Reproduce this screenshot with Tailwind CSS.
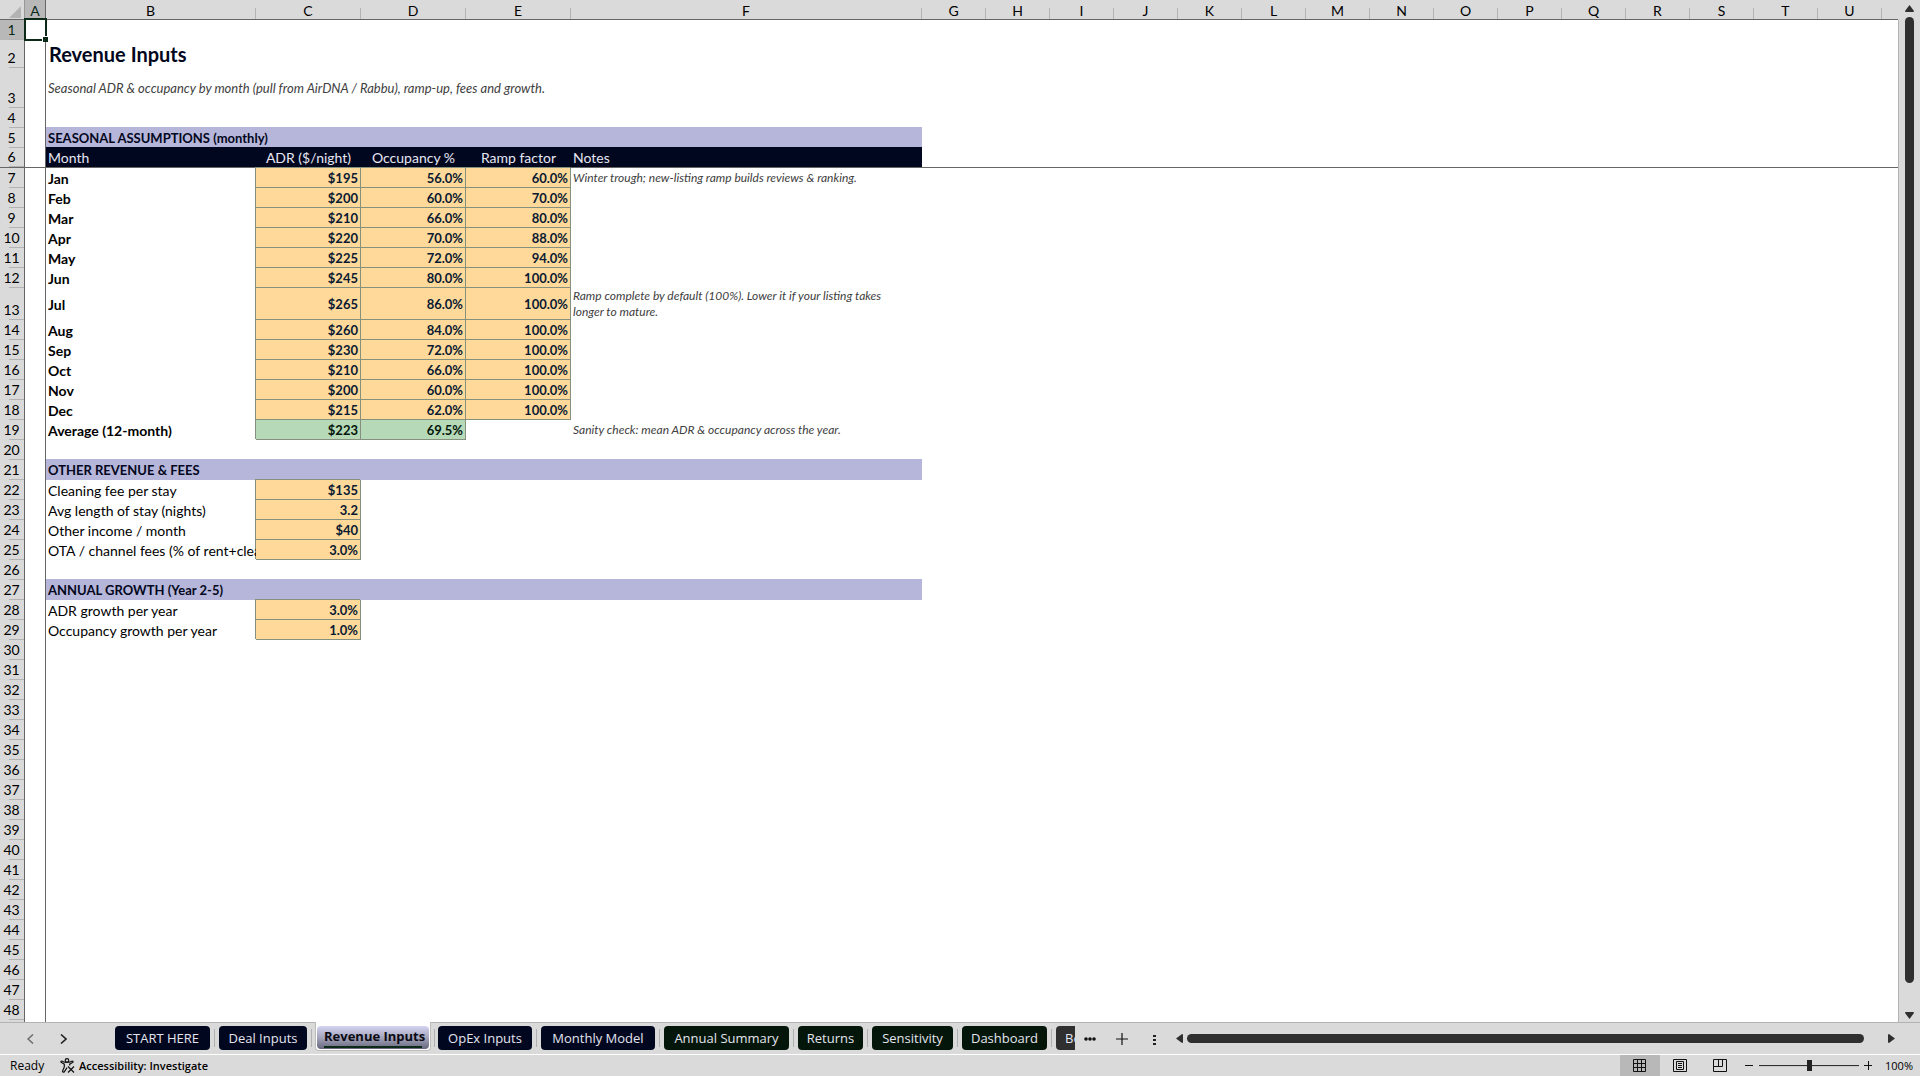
<!DOCTYPE html>
<html lang="en">
  <head>
    <meta charset="UTF-8" />
    <meta name="viewport" content="width=device-width, initial-scale=1.0" />
    <title>Revenue Inputs</title>
    <script src="https://cdn.jsdelivr.net/npm/@tailwindcss/browser@4"></script>
  </head>
  <body
    class="h-screen flex flex-col overflow-hidden bg-[#dadada] text-black font-['Open_Sans',sans-serif]"
  >
    <main class="flex flex-1 min-h-0">
      <div class="flex-1 min-w-0 overflow-hidden relative">
        <table
          class="table-fixed w-full border-separate border-spacing-0 bg-white font-['Lato',sans-serif] text-[14px] leading-4"
        >
          <colgroup id="columns">
            <col class="w-[25px]" />
            <col class="w-[21px]" />
            <col class="w-[210px]" />
            <col class="w-[105px]" />
            <col class="w-[105px]" />
            <col class="w-[105px]" />
            <col class="w-[351px]" />
          </colgroup>
          <thead>
            <tr id="letters" class="h-5"></tr>
          </thead>
          <tbody id="sheet"></tbody>
        </table>
        <!-- active cell -->
        <div
          class="absolute left-[24px] top-[18px] w-[23px] h-[23px] border-2 border-[#0b2a18]"
        >
          <span
            class="absolute -right-[3px] -bottom-[3px] size-[6px] bg-[#0b2a18] border-t border-l border-white"
          ></span>
        </div>
      </div>
      <div
        class="w-[22px] flex flex-col items-center pt-[5px] pb-[3px] gap-[5px] relative"
      >
        <span class="absolute left-0 top-5 bottom-0 w-px bg-[#b3b3b3]"></span>
        <button aria-label="Scroll up">
          <svg class="block" width="9" height="7" fill="#2f2f2f">
            <path d="M4.5 0 L9 6 Q9 7 8 7 H1 Q0 7 0 6 Z" />
          </svg>
        </button>
        <div class="flex-1 w-[9px] flex flex-col pb-6">
          <div class="flex-1 rounded-full bg-[#2f2f2f]"></div>
        </div>
        <button aria-label="Scroll down">
          <svg class="block" width="9" height="7" fill="#2f2f2f">
            <path d="M4.5 7 L9 1 Q9 0 8 0 H1 Q0 0 0 1 Z" />
          </svg>
        </button>
      </div>
    </main>

    <nav
      class="h-[33px] flex items-center border-t border-t-[#b3b3b3] border-b border-b-white relative"
    >
      <div class="w-[115px] flex items-center pl-[27px] gap-[26px]">
        <button aria-label="Previous sheet">
          <svg class="block" width="7" height="10" fill="none" stroke="#666" stroke-width="1.4">
            <path d="M6 .5 L1 5 L6 9.5" />
          </svg>
        </button>
        <button aria-label="Next sheet">
          <svg class="block" width="7" height="10" fill="none" stroke="#222" stroke-width="1.6">
            <path d="M1 .5 L6 5 L1 9.5" />
          </svg>
        </button>
      </div>
      <div class="w-[960px] h-[33px] -mt-px flex items-center overflow-hidden text-[13px] leading-[23px] text-[#e4e4ee] whitespace-nowrap">
        <button class="w-[95px] h-6 shrink-0 rounded bg-[#020720]">START HERE</button>
        <span class="w-px h-[18px] mx-1 shrink-0 bg-[#b0b0b0]"></span>
        <button class="w-[88px] h-6 shrink-0 rounded bg-[#020720]">Deal Inputs</button>
        <span class="w-px h-[18px] ml-1 mr-[3px] shrink-0 bg-[#b0b0b0]"></span>
        <div class="w-[116px] h-[29px] shrink-0 self-start px-px bg-white rounded-b border-x border-b border-[#bdbdbd]">
          <button
            class="w-full h-[23px] mt-1 block rounded bg-linear-to-b from-[#d4d4f4] via-[#a5a5bb] to-[#66667c] px-[7px] text-[#0a0a14] font-bold"
          >
            <span class="block h-[21px] leading-[18px] border-b-2 border-[#0b2a18]">Revenue Inputs</span>
          </button>
        </div>
        <span class="w-px h-[18px] mx-[3px] shrink-0 bg-[#b0b0b0]"></span>
        <button class="w-[94px] h-6 shrink-0 rounded bg-[#020720]">OpEx Inputs</button>
        <span class="w-px h-[18px] mx-1 shrink-0 bg-[#b0b0b0]"></span>
        <button class="w-[114px] h-6 shrink-0 rounded bg-[#020720]">Monthly Model</button>
        <span class="w-px h-[18px] mx-1 shrink-0 bg-[#b0b0b0]"></span>
        <button class="w-[125px] h-6 shrink-0 rounded bg-[#04160a]">Annual Summary</button>
        <span class="w-px h-[18px] mx-1 shrink-0 bg-[#b0b0b0]"></span>
        <button class="w-[65px] h-6 shrink-0 rounded bg-[#04160a]">Returns</button>
        <span class="w-px h-[18px] mx-1 shrink-0 bg-[#b0b0b0]"></span>
        <button class="w-[81px] h-6 shrink-0 rounded bg-[#04160a]">Sensitivity</button>
        <span class="w-px h-[18px] mx-1 shrink-0 bg-[#b0b0b0]"></span>
        <button class="w-[85px] h-6 shrink-0 rounded bg-[#04160a]">Dashboard</button>
        <span class="w-px h-[18px] mx-1 shrink-0 bg-[#b0b0b0]"></span>
        <button class="h-6 shrink-0 rounded bg-[#2f2f2f] px-[9px]">Benchmarks</button>
      </div>
      <div class="flex items-center pl-[9px] gap-5">
        <button aria-label="More sheets">
          <svg class="block" width="12" height="12" fill="#111">
            <circle cx="2" cy="6" r="1.8" />
            <circle cx="6" cy="6" r="1.8" />
            <circle cx="10" cy="6" r="1.8" />
          </svg>
        </button>
        <button aria-label="New sheet">
          <svg class="block" width="12" height="12" stroke="#111" stroke-width="1.2">
            <path d="M6 0 V12 M0 6 H12" />
          </svg>
        </button>
        <span class="w-[12px] pl-[5px]">
          <svg class="block" width="4" height="12" fill="#222">
            <path d="M0 2h3v2H0z M0 6h3v2H0z M0 10h3v2H0z" />
          </svg>
        </span>
      </div>
      <div class="flex-1 flex items-center pl-[16px] pr-[25px] gap-[4px]">
        <button aria-label="Scroll left">
          <svg class="block" width="7" height="9" fill="#2f2f2f">
            <path d="M0 4.5 L6 0 Q7 0 7 1 V8 Q7 9 6 9 Z" />
          </svg>
        </button>
        <div class="flex-1 h-[9px] pr-5">
          <div class="h-full rounded-full bg-[#2f2f2f]"></div>
        </div>
        <button aria-label="Scroll right">
          <svg class="block" width="7" height="9" fill="#2f2f2f">
            <path d="M7 4.5 L1 0 Q0 0 0 1 V8 Q0 9 1 9 Z" />
          </svg>
        </button>
      </div>
    </nav>

    <footer class="h-[21px] flex items-center pl-[10px] pr-[7px] text-[12px] leading-5">
      <span class="w-[50px]">Ready</span>
      <button class="flex items-center gap-1 text-[11px] font-semibold">
        <svg width="15" height="15" fill="none" stroke="#111" stroke-width="1.2">
          <circle cx="7" cy="2.5" r="1.8" />
          <path d="M4.5 4.2 L1.8 3 Q.6 3 1 4.2 L4.3 6.2 L4.3 9 L2.5 13.2 Q3 14.6 4.2 14 L7 9.6 M9.5 4.2 L12.2 3 Q13.4 3 13 4.2 L9.7 6.2 V7.5 M4.5 4.2 H9.5" />
          <path d="M8 8.5 L14 14.5 M14 8.5 L8 14.5" />
        </svg>
        Accessibility: Investigate
      </button>
      <div class="ml-auto flex items-center">
        <button aria-label="Normal view" class="w-10 h-[21px] flex items-center justify-center bg-[#b8b8b8]">
          <svg width="14" height="14" fill="none" stroke="#111">
            <path d="M.5 .5h12v12h-12z M4.5 .5v12 M8.5 .5v12 M.5 4.5h12 M.5 8.5h12" />
          </svg>
        </button>
        <button aria-label="Page layout" class="w-10 h-[21px] flex items-center justify-center">
          <svg width="14" height="14" fill="none" stroke="#111">
            <path d="M.5 .5h13v12h-13z M3.5 2.5h7v8h-7z M5 4.5h4 M5 6.5h4 M5 8.5h4" />
          </svg>
        </button>
        <button aria-label="Page break preview" class="w-10 h-[21px] flex items-center justify-center">
          <svg width="14" height="14" fill="none" stroke="#111">
            <path d="M.5 .5h13v12h-13z M.5 7.5h9v-7 M5.5 .5v7" />
          </svg>
        </button>
        <button aria-label="Zoom out" class="ml-[5px]">
          <svg class="block" width="9" height="9" stroke="#111"><path d="M0 4.5h8" /></svg>
        </button>
        <input
          type="range"
          aria-label="Zoom"
          min="0"
          max="200"
          value="100"
          class="w-[100px] h-3 mx-[5px] appearance-none bg-linear-to-b from-transparent from-45% via-[#222] via-45% to-transparent to-55% [&::-webkit-slider-thumb]:appearance-none [&::-webkit-slider-thumb]:w-[5px] [&::-webkit-slider-thumb]:h-[11px] [&::-webkit-slider-thumb]:bg-[#222]"
        />
        <button aria-label="Zoom in">
          <svg class="block" width="9" height="9" stroke="#111"><path d="M0 4.5h8 M4.5 0v9" /></svg>
        </button>
        <span class="w-[40px] text-right text-[11px]">100%</span>
      </div>
    </footer>

    <script>
      const letters = "ABCDEFGHIJKLMNOPQRSTU".split("");
      const rowCount = 48;

      const input = "pt-px bg-[#ffd999] text-[13px] text-[#0a1a33] font-bold text-right pr-[2px] border-r border-b border-[#85907f] shadow-[-1px_-1px_0_0_#85907f]";
      const result = "pt-px bg-[#b6d9b8] text-[13px] text-[#04160a] font-bold text-right pr-[2px] border-r border-b border-[#85907f] shadow-[-1px_-1px_0_0_#85907f]";
      const section = "bg-[#b6b6da] text-[13px] text-[#020720] font-bold pl-[2px] shadow-[0_-1px_0_0_#b6b6da]";
      const head = "pt-px bg-[#020720] text-[#e6e6f2] font-normal shadow-[0_-1px_0_0_#020720]";
      const label = "pt-px pl-[2px] overflow-hidden whitespace-nowrap";
      const note = "pt-0 pl-[2px] pr-5 text-[12px] italic text-[#404040]";

      const heights = { 2: "h-7", 3: "h-10", 13: "h-8" };

      const months = [
        ["Jan", "$195", "56.0%", "60.0%", "Winter trough; new-listing ramp builds reviews &amp; ranking."],
        ["Feb", "$200", "60.0%", "70.0%"],
        ["Mar", "$210", "66.0%", "80.0%"],
        ["Apr", "$220", "70.0%", "88.0%"],
        ["May", "$225", "72.0%", "94.0%"],
        ["Jun", "$245", "80.0%", "100.0%"],
        ["Jul", "$265", "86.0%", "100.0%", "Ramp complete by default (100%). Lower it if your listing takes longer to mature."],
        ["Aug", "$260", "84.0%", "100.0%"],
        ["Sep", "$230", "72.0%", "100.0%"],
        ["Oct", "$210", "66.0%", "100.0%"],
        ["Nov", "$200", "60.0%", "100.0%"],
        ["Dec", "$215", "62.0%", "100.0%"],
      ];

      // each cell is [text, classes, colspan]
      const rows = {
        2: [["Revenue Inputs", "pl-[3px] text-[20px] leading-6 font-bold text-[#020720]", 5]],
        3: [["Seasonal ADR &amp; occupancy by month (pull from AirDNA / Rabbu), ramp-up, fees and growth.", "pl-[2px] text-[13px] italic text-[#404040]", 5]],
        5: [["SEASONAL ASSUMPTIONS (monthly)", section, 5]],
        6: [
          ["Month", head + " text-left pl-[2px]"],
          ["ADR ($/night)", head + " text-center"],
          ["Occupancy %", head + " text-center"],
          ["Ramp factor", head + " text-center"],
          ["Notes", head + " text-left pl-[2px]"],
        ],
        19: [
          ["Average (12-month)", label + " font-bold"],
          ["$223", result],
          ["69.5%", result],
          ["", ""],
          ["Sanity check: mean ADR &amp; occupancy across the year.", note],
        ],
        21: [["OTHER REVENUE &amp; FEES", section, 5]],
        22: [["Cleaning fee per stay", label], ["$135", input]],
        23: [["Avg length of stay (nights)", label], ["3.2", input]],
        24: [["Other income / month", label], ["$40", input]],
        25: [["OTA / channel fees (% of rent+cleaning)", label], ["3.0%", input]],
        27: [["ANNUAL GROWTH (Year 2-5)", section, 5]],
        28: [["ADR growth per year", label], ["3.0%", input]],
        29: [["Occupancy growth per year", label], ["1.0%", input]],
      };

      months.forEach(([month, adr, occupancy, ramp, text], index) => {
        rows[index + 7] = [
          [month, label + " font-bold"],
          [adr, input],
          [occupancy, input],
          [ramp, input],
          [text || "", note],
        ];
      });

      // columns G to U share one width, the last one takes what is left
      document.getElementById("columns").innerHTML +=
        '<col class="w-[64px]" />'.repeat(15) + "<col />";

      document.getElementById("letters").innerHTML =
        `<th class="bg-[#dadada] border-b border-r border-b-[#666] border-r-[#999] p-0">
          <svg class="block ml-[9px] mt-1" width="12" height="12" fill="#b3b3b3"><path d="M12 0v12H0z" /></svg>
        </th>` +
        letters
          .map((letter) =>
            letter === "A"
              ? `<th class="bg-[#b8b8b8] text-[#0b2a18] font-normal p-0 pt-[2px] border-b border-r border-[#666]">A</th>`
              : `<th class="bg-[#dadada] font-normal p-0 pt-[2px] pr-px border-b border-[#666] relative after:absolute after:right-0 after:bottom-0 after:w-px after:h-[11px] after:bg-[#b3b3b3]">${letter}</th>`
          )
          .join("") +
        `<th class="bg-[#dadada] border-b border-[#666]"></th>`;

      let html = "";
      for (let n = 1; n <= rowCount; n++) {
        const frozen = n === 6 ? "border-b border-b-[#666]" : "";
        const cells = rows[n] || [];
        const used = cells.reduce((sum, cell) => sum + (cell[2] || 1), 0);
        html += `<tr class="${heights[n] || "h-5"}">`;
        html += `<th class="relative p-0 pr-[1px] pb-[2px] align-bottom font-normal border-r border-r-[#666] ${frozen} ${
          n === 1 ? "bg-[#b8b8b8] text-[#0b2a18]" : "bg-[#dadada]"
        } after:absolute after:right-0 after:bottom-0 after:w-[15px] after:h-px after:bg-[#b3b3b3]">${n}</th>`;
        html += `<td class="p-0 border-r border-r-[#666] ${frozen}"></td>`;
        cells.forEach(([text, classes, span]) => {
          html += `<td class="pb-0 ${classes} ${frozen}" colspan="${span || 1}">${text}</td>`;
        });
        html += `<td class="p-0 ${frozen}" colspan="${21 - used}"></td></tr>`;
      }
      // strip of the next row that shows above the tab bar
      html += `<tr class="h-5"><th class="bg-[#dadada] border-r border-r-[#666]"></th><td class="border-r border-r-[#666]"></td><td colspan="21"></td></tr>`;
      document.getElementById("sheet").innerHTML = html;
    </script>
  </body>
</html>
